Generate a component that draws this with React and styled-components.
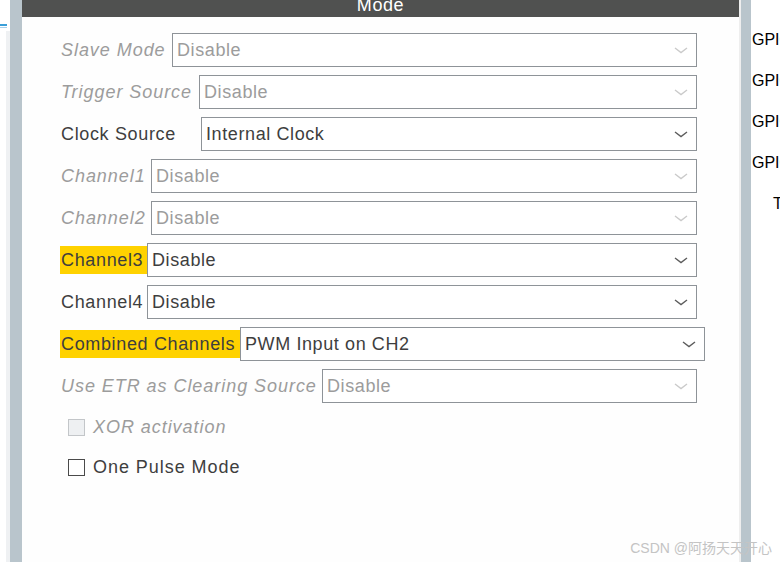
import React from 'react';
import styled, { createGlobalStyle } from 'styled-components';

const GlobalStyle = createGlobalStyle`
  html, body { margin: 0; padding: 0; background: #ffffff; }
  body { font-family: "Liberation Sans", Arial, sans-serif; }
`;

const Page = styled.div`
  position: relative;
  display: flex;
  width: 780px;
  height: 562px;
  overflow: hidden;
  background: #ffffff;
`;

const LeftEdge = styled.div`
  width: 10px;
  display: flex;
  flex-direction: column;
`;

const Accent = styled.div`
  width: 7px;
  height: ${p => p.h}px;
  margin-top: ${p => p.top}px;
  background: ${p => p.color};
`;

const EdgeStrip = styled.div`
  flex: 1;
  margin-top: 3px;
  margin-left: 6px;
  background: #eff1f3;
`;

const Splitter = styled.div`
  width: ${p => p.w}px;
  background: #b9c5cc;
  flex-shrink: 0;
`;

const Panel = styled.div`
  width: 717px;
  flex-shrink: 0;
  display: flex;
  flex-direction: column;
  background: #fefefe;
`;

const Header = styled.div`
  height: 17px;
  background: #505150;
  color: #ffffff;
  font-size: 18px;
  letter-spacing: 0.6px;
  line-height: 10px;
  text-align: center;
  overflow: hidden;
`;

const Body = styled.div`
  display: flex;
  flex-direction: column;
  gap: 8px;
  padding: 16px 42px 0 38px;
`;

const Row = styled.div`
  display: flex;
  align-items: center;
  height: 34px;
  margin-right: ${p => (p.wide ? -8 : 0)}px;
`;

const Label = styled.div`
  width: ${p => p.w}px;
  flex-shrink: 0;
  box-sizing: border-box;
  height: 28px;
  line-height: 28px;
  padding-left: 1px;
  font-size: 18px;
  white-space: nowrap;
  font-style: ${p => (p.disabled ? 'italic' : 'normal')};
  letter-spacing: ${p => (p.disabled ? 0.95 : 0.65)}px;
  color: ${p => (p.disabled ? '#9c9c9c' : '#3e3e3e')};
  background: ${p => (p.mark ? '#ffd200' : 'transparent')};
`;

const Select = styled.div`
  flex: 1;
  height: 34px;
  box-sizing: border-box;
  border: 1px solid #8e9398;
  background: #ffffff;
  display: flex;
  align-items: center;
  justify-content: space-between;
  padding: 0 8px 0 4px;
  font-size: 18px;
  letter-spacing: 0.6px;
  color: ${p => (p.disabled ? '#9c9c9c' : '#3e3e3e')};
`;

const Chevron = ({ disabled }) => (
  <svg width="14" height="7" viewBox="0 0 14 7">
    <polyline
      points="1,1 7,5.5 13,1"
      fill="none"
      stroke={disabled ? '#cacaca' : '#5c5c5c'}
      strokeWidth="1.4"
    />
  </svg>
);

const Checks = styled.div`
  display: flex;
  flex-direction: column;
  gap: 16px;
  margin-top: 4px;
  padding-left: 8px;
`;

const CheckRow = styled.div`
  display: flex;
  align-items: center;
  gap: 8px;
  height: 24px;
  font-size: 18px;
  font-style: ${p => (p.disabled ? 'italic' : 'normal')};
  letter-spacing: ${p => (p.disabled ? 0.95 : 0.95)}px;
  color: ${p => (p.disabled ? '#9c9c9c' : '#3e3e3e')};
`;

const Box = styled.span`
  width: 17px;
  height: 17px;
  box-sizing: border-box;
  border: 1px solid ${p => (p.disabled ? '#c3c6c9' : '#4a4a4a')};
  background: ${p => (p.disabled ? '#eef0f2' : '#ffffff')};
`;

const Gutter = styled.div`
  width: 2px;
  background: #eeeeee;
`;

const RightPane = styled.div`
  flex: 1;
  display: flex;
  flex-direction: column;
  padding: 19px 0 0 1px;
  overflow: hidden;
`;

const PinLabel = styled.div`
  height: 41px;
  line-height: 41px;
  font-size: 16px;
  color: #000000;
  white-space: nowrap;
  padding-left: ${p => p.indent || 0}px;
`;

const Watermark = styled.div`
  position: absolute;
  right: 8px;
  bottom: 5px;
  font-family: "Liberation Sans", "Noto Sans CJK SC", sans-serif;
  font-size: 14px;
  color: #c4c4c4;
`;

const rows = [
  { label: 'Slave Mode', w: 112, value: 'Disable', disabled: true },
  { label: 'Trigger Source', w: 139, value: 'Disable', disabled: true },
  { label: 'Clock Source', w: 141, value: 'Internal Clock' },
  { label: 'Channel1', w: 91, value: 'Disable', disabled: true },
  { label: 'Channel2', w: 91, value: 'Disable', disabled: true },
  { label: 'Channel3', w: 87, value: 'Disable', mark: true },
  { label: 'Channel4', w: 87, value: 'Disable' },
  { label: 'Combined Channels', w: 180, value: 'PWM Input on CH2', mark: true, wide: true },
  { label: 'Use ETR as Clearing Source', w: 262, value: 'Disable', disabled: true },
];

const App = () => {
  return (
    <Page>
      <GlobalStyle />
      <LeftEdge>
        <Accent top={24} h={2} color="#3a9fd8" />
        <Accent top={1} h={1} color="#a9d2ec" />
        <EdgeStrip />
      </LeftEdge>
      <Splitter w={12} />
      <Panel>
        <Header>Mode</Header>
        <Body>
          {rows.map(r => (
            <Row key={r.label} wide={r.wide}>
              <Label w={r.w} disabled={r.disabled} mark={r.mark}>{r.label}</Label>
              <Select disabled={r.disabled}>
                <span>{r.value}</span>
                <Chevron disabled={r.disabled} />
              </Select>
            </Row>
          ))}
          <Checks>
            <CheckRow disabled>
              <Box disabled />
              XOR activation
            </CheckRow>
            <CheckRow>
              <Box />
              One Pulse Mode
            </CheckRow>
          </Checks>
        </Body>
      </Panel>
      <Gutter />
      <Splitter w={10} />
      <RightPane>
        <PinLabel>GPIO_Output</PinLabel>
        <PinLabel>GPIO_Output</PinLabel>
        <PinLabel>GPIO_Output</PinLabel>
        <PinLabel>GPIO_Output</PinLabel>
        <PinLabel indent={21}>TIM2_CH2</PinLabel>
      </RightPane>
      <Watermark>CSDN @阿扬天天开心</Watermark>
    </Page>
  );
};

export default App;
